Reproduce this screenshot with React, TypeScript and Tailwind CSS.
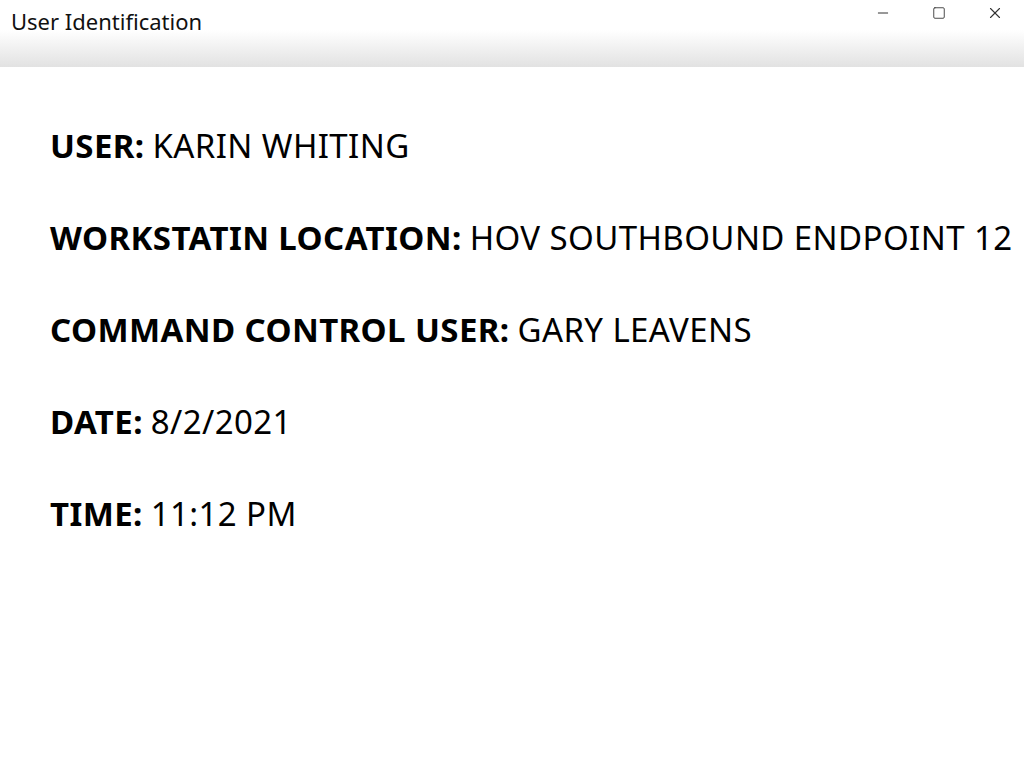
import { Minus, Square, X } from "lucide-react";

const rows = [
  { label: "USER:", value: "KARIN WHITING" },
  { label: "WORKSTATIN LOCATION:", value: "HOV SOUTHBOUND ENDPOINT 12" },
  { label: "COMMAND CONTROL USER:", value: "GARY LEAVENS" },
  { label: "DATE:", value: "8/2/2021" },
  { label: "TIME:", value: "11:12 PM" },
];

export default function App() {
  return (
    <div className="w-[1024px] h-[768px] bg-white overflow-hidden font-['Noto_Sans',sans-serif] text-black">
      <div className="h-[67px] bg-gradient-to-b from-white from-[45%] to-[#e2e2e2] flex items-start justify-between">
        <div className="pl-[11px] pt-[7px] text-[22px] leading-[28px] text-[#111]">
          User Identification
        </div>
        <div className="flex items-center pr-[1px] pt-[4px] text-[#333]">
          <div className="w-[56px] flex justify-center">
            <Minus size={16} strokeWidth={1.5} />
          </div>
          <div className="w-[56px] flex justify-center">
            <Square size={14} strokeWidth={1.5} />
          </div>
          <div className="w-[56px] flex justify-center">
            <X size={18} strokeWidth={1.5} />
          </div>
        </div>
      </div>
      <div className="flex flex-col pl-[50px] pt-[56px]">
        {rows.map((r) => (
          <div key={r.label} className="h-[46px] mb-[46px] flex items-center text-[33px] leading-[46px] whitespace-nowrap">
            <span className="font-bold tracking-[0.4px]">{r.label}</span>
            <span className="ml-[8px] tracking-[0.4px]">{r.value}</span>
          </div>
        ))}
      </div>
    </div>
  );
}
